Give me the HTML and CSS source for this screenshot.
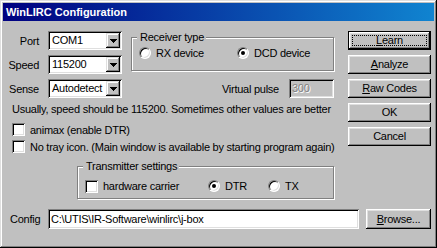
FILE: index.html
```html
<!DOCTYPE html>
<html lang="en">
<head>
    <meta charset="UTF-8">
    <title>WinLIRC Configuration</title>
    <link rel="stylesheet" href="styles.css">
</head>
<body>

    <div class="window">
        <div class="titlebar">WinLIRC Configuration</div>

        <div class="client">
            <div class="main">
                <div class="settings">
                    <div class="serial">
                        <span class="field-label">Port</span>
                        <div class="combo">
                            <span class="combo-value">COM1</span>
                            <span class="combo-btn"><svg width="7" height="4" viewBox="0 0 7 4"><path d="M0 0h7v1H0zM1 1h5v1H1zM2 2h3v1H2zM3 3h1v1H3z"/></svg></span>
                        </div>

                        <fieldset class="group receiver">
                            <legend>Receiver type</legend>
                            <div class="options">
                                <label class="option"><span class="radio"></span>RX device</label>
                                <label class="option"><span class="radio checked"></span>DCD device</label>
                            </div>
                        </fieldset>

                        <span class="field-label">Speed</span>
                        <div class="combo">
                            <span class="combo-value">115200</span>
                            <span class="combo-btn"><svg width="7" height="4" viewBox="0 0 7 4"><path d="M0 0h7v1H0zM1 1h5v1H1zM2 2h3v1H2zM3 3h1v1H3z"/></svg></span>
                        </div>

                        <span class="field-label">Sense</span>
                        <div class="combo">
                            <span class="combo-value">Autodetect</span>
                            <span class="combo-btn"><svg width="7" height="4" viewBox="0 0 7 4"><path d="M0 0h7v1H0zM1 1h5v1H1zM2 2h3v1H2zM3 3h1v1H3z"/></svg></span>
                        </div>

                        <div class="pulse">
                            <span>Virtual pulse</span>
                            <span class="textbox disabled">300</span>
                        </div>
                    </div>

                    <p class="hint">Usually, speed should be 115200. Sometimes other values are better</p>

                    <label class="check-row"><span class="checkbox"></span>animax (enable DTR)</label>
                    <label class="check-row"><span class="checkbox"></span>No tray icon. (Main window is available by starting program again)</label>

                    <fieldset class="group transmitter">
                        <legend>Transmitter settings</legend>
                        <div class="options">
                            <label class="option"><span class="checkbox"></span>hardware carrier</label>
                            <label class="option"><span class="radio checked"></span>DTR</label>
                            <label class="option"><span class="radio"></span>TX</label>
                        </div>
                    </fieldset>
                </div>

                <div class="buttons">
                    <span class="btn default"><u>L</u>earn</span>
                    <span class="btn"><u>A</u>nalyze</span>
                    <span class="btn"><u>R</u>aw Codes</span>
                    <span class="btn">OK</span>
                    <span class="btn">Cancel</span>
                </div>
            </div>

            <div class="config-row">
                <span class="config-label">Config</span>
                <span class="textbox path">C:\UTIS\IR-Software\winlirc\j-box</span>
                <span class="btn browse"><u>B</u>rowse...</span>
            </div>
        </div>
    </div>

</body>
</html>
```

FILE: styles.css
```css
* {
    box-sizing: border-box;
}

body {
    margin: 0;
    background-color: #c0c0c0;
}

.window {
    width: 437px;
    height: 248px;
    padding: 3px;
    background-color: #c0c0c0;
    /* raised 2px window frame */
    box-shadow: inset -1px -1px #000, inset 1px 1px #dfdfdf, inset -2px -2px #808080, inset 2px 2px #fff;
    font: 11px "Liberation Sans", Arial, sans-serif;
    letter-spacing: -0.25px;
    color: #000;
}

.titlebar {
    height: 18px;
    padding-left: 3px;
    line-height: 18px;
    background: linear-gradient(to right, #000080, #1084d0);
    color: #fff;
    font-weight: bold;
    letter-spacing: 0;
}

.client {
    padding: 10px 0 0 5px;
}

.main {
    display: flex;
    gap: 14px;
}

.settings {
    width: 326px;
}

.serial {
    display: grid;
    grid-template-columns: 31px 74px 203px;
    grid-template-rows: repeat(3, 19px);
    column-gap: 9px;
    row-gap: 5px;
}

.field-label {
    align-self: center;
    text-align: right;
}

.combo {
    display: flex;
    padding: 2px;
    background-color: #fff;
    box-shadow: inset 1px 1px #808080, inset -1px -1px #fff, inset 2px 2px #000, inset -2px -2px #dfdfdf;
}

.combo-value {
    flex: 1;
    padding-left: 2px;
    line-height: 15px;
    white-space: nowrap;
    overflow: hidden;
}

.combo-btn {
    width: 14px;
    display: flex;
    align-items: center;
    justify-content: center;
    background-color: #c0c0c0;
    box-shadow: inset -1px -1px #000, inset 1px 1px #dfdfdf, inset -2px -2px #808080, inset 2px 2px #fff;
}

.group {
    margin: 0;
    padding: 0;
    min-width: 0;
    border: 1px solid #808080;
    /* etched look */
    box-shadow: inset 1px 1px #fff, 1px 1px #fff;
}

.group legend {
    margin-left: 5px;
    padding: 0 2px 0 3px;
    line-height: 13px;
    background-color: #c0c0c0;
}

.receiver {
    grid-column: 3;
    grid-row: 1 / span 2;
    height: 40px;
}

.receiver .options {
    display: grid;
    grid-template-columns: 98px auto;
    height: 14px;
    margin-top: 2px;
    padding-left: 7px;
    align-items: center;
}

.option {
    display: flex;
    align-items: center;
    gap: 5px;
    white-space: nowrap;
}

.radio {
    position: relative;
    flex: none;
    width: 12px;
    height: 12px;
    border-radius: 50%;
    background-color: #fff;
    border: 1px solid;
    border-color: #808080 #fff #fff #808080;
    box-shadow: inset 1px 1px #000, inset -1px -1px #dfdfdf;
}

.radio.checked::after {
    content: "";
    position: absolute;
    left: 3px;
    top: 3px;
    width: 4px;
    height: 4px;
    border-radius: 50%;
    background-color: #000;
}

.checkbox {
    flex: none;
    width: 13px;
    height: 13px;
    background-color: #fff;
    box-shadow: inset 1px 1px #808080, inset -1px -1px #fff, inset 2px 2px #000, inset -2px -2px #dfdfdf;
}

.pulse {
    grid-column: 3;
    grid-row: 3;
    justify-self: end;
    display: flex;
    align-items: center;
    gap: 10px;
}

.textbox {
    height: 19px;
    padding: 0 3px;
    line-height: 19px;
    background-color: #fff;
    box-shadow: inset 1px 1px #808080, inset -1px -1px #fff, inset 2px 2px #000, inset -2px -2px #dfdfdf;
    white-space: nowrap;
}

.textbox.disabled {
    width: 45px;
    background-color: #c0c0c0;
    color: #808080;
    text-shadow: 1px 1px #fff;
}

.hint {
    margin: 5px 0 0 4px;
    line-height: 13px;
    white-space: nowrap;
}

.check-row {
    display: flex;
    align-items: center;
    gap: 5px;
    height: 13px;
    margin: 4px 0 0 4px;
    white-space: nowrap;
}

.hint + .check-row {
    margin-top: 7px;
}

.transmitter {
    width: 257px;
    height: 39px;
    margin: 7px 0 0 69px;
}

.transmitter .options {
    display: grid;
    grid-template-columns: 123px 60px auto;
    height: 14px;
    margin-top: 6px;
    padding-left: 7px;
    align-items: center;
}

.buttons {
    width: 83px;
    display: flex;
    flex-direction: column;
    gap: 5px;
}

.btn {
    position: relative;
    display: block;
    height: 19px;
    line-height: 19px;
    text-align: center;
    background-color: #c0c0c0;
    box-shadow: inset -1px -1px #000, inset 1px 1px #fff, inset -2px -2px #808080, inset 2px 2px #dfdfdf;
}

.btn.default {
    box-shadow: inset 0 0 0 1px #000, inset -2px -2px #000, inset 2px 2px #fff, inset -3px -3px #808080, inset 3px 3px #dfdfdf;
}

.btn.default::after {
    content: "";
    position: absolute;
    inset: 4px;
    border: 1px dotted #000;
}

.config-row {
    display: flex;
    align-items: center;
    height: 20px;
    margin-top: 10px;
}

.config-label {
    width: 40px;
    padding-left: 2px;
}

.textbox.path {
    width: 311px;
    height: 20px;
    line-height: 20px;
}

.btn.browse {
    width: 65px;
    height: 20px;
    line-height: 20px;
    margin-left: 7px;
}
```
